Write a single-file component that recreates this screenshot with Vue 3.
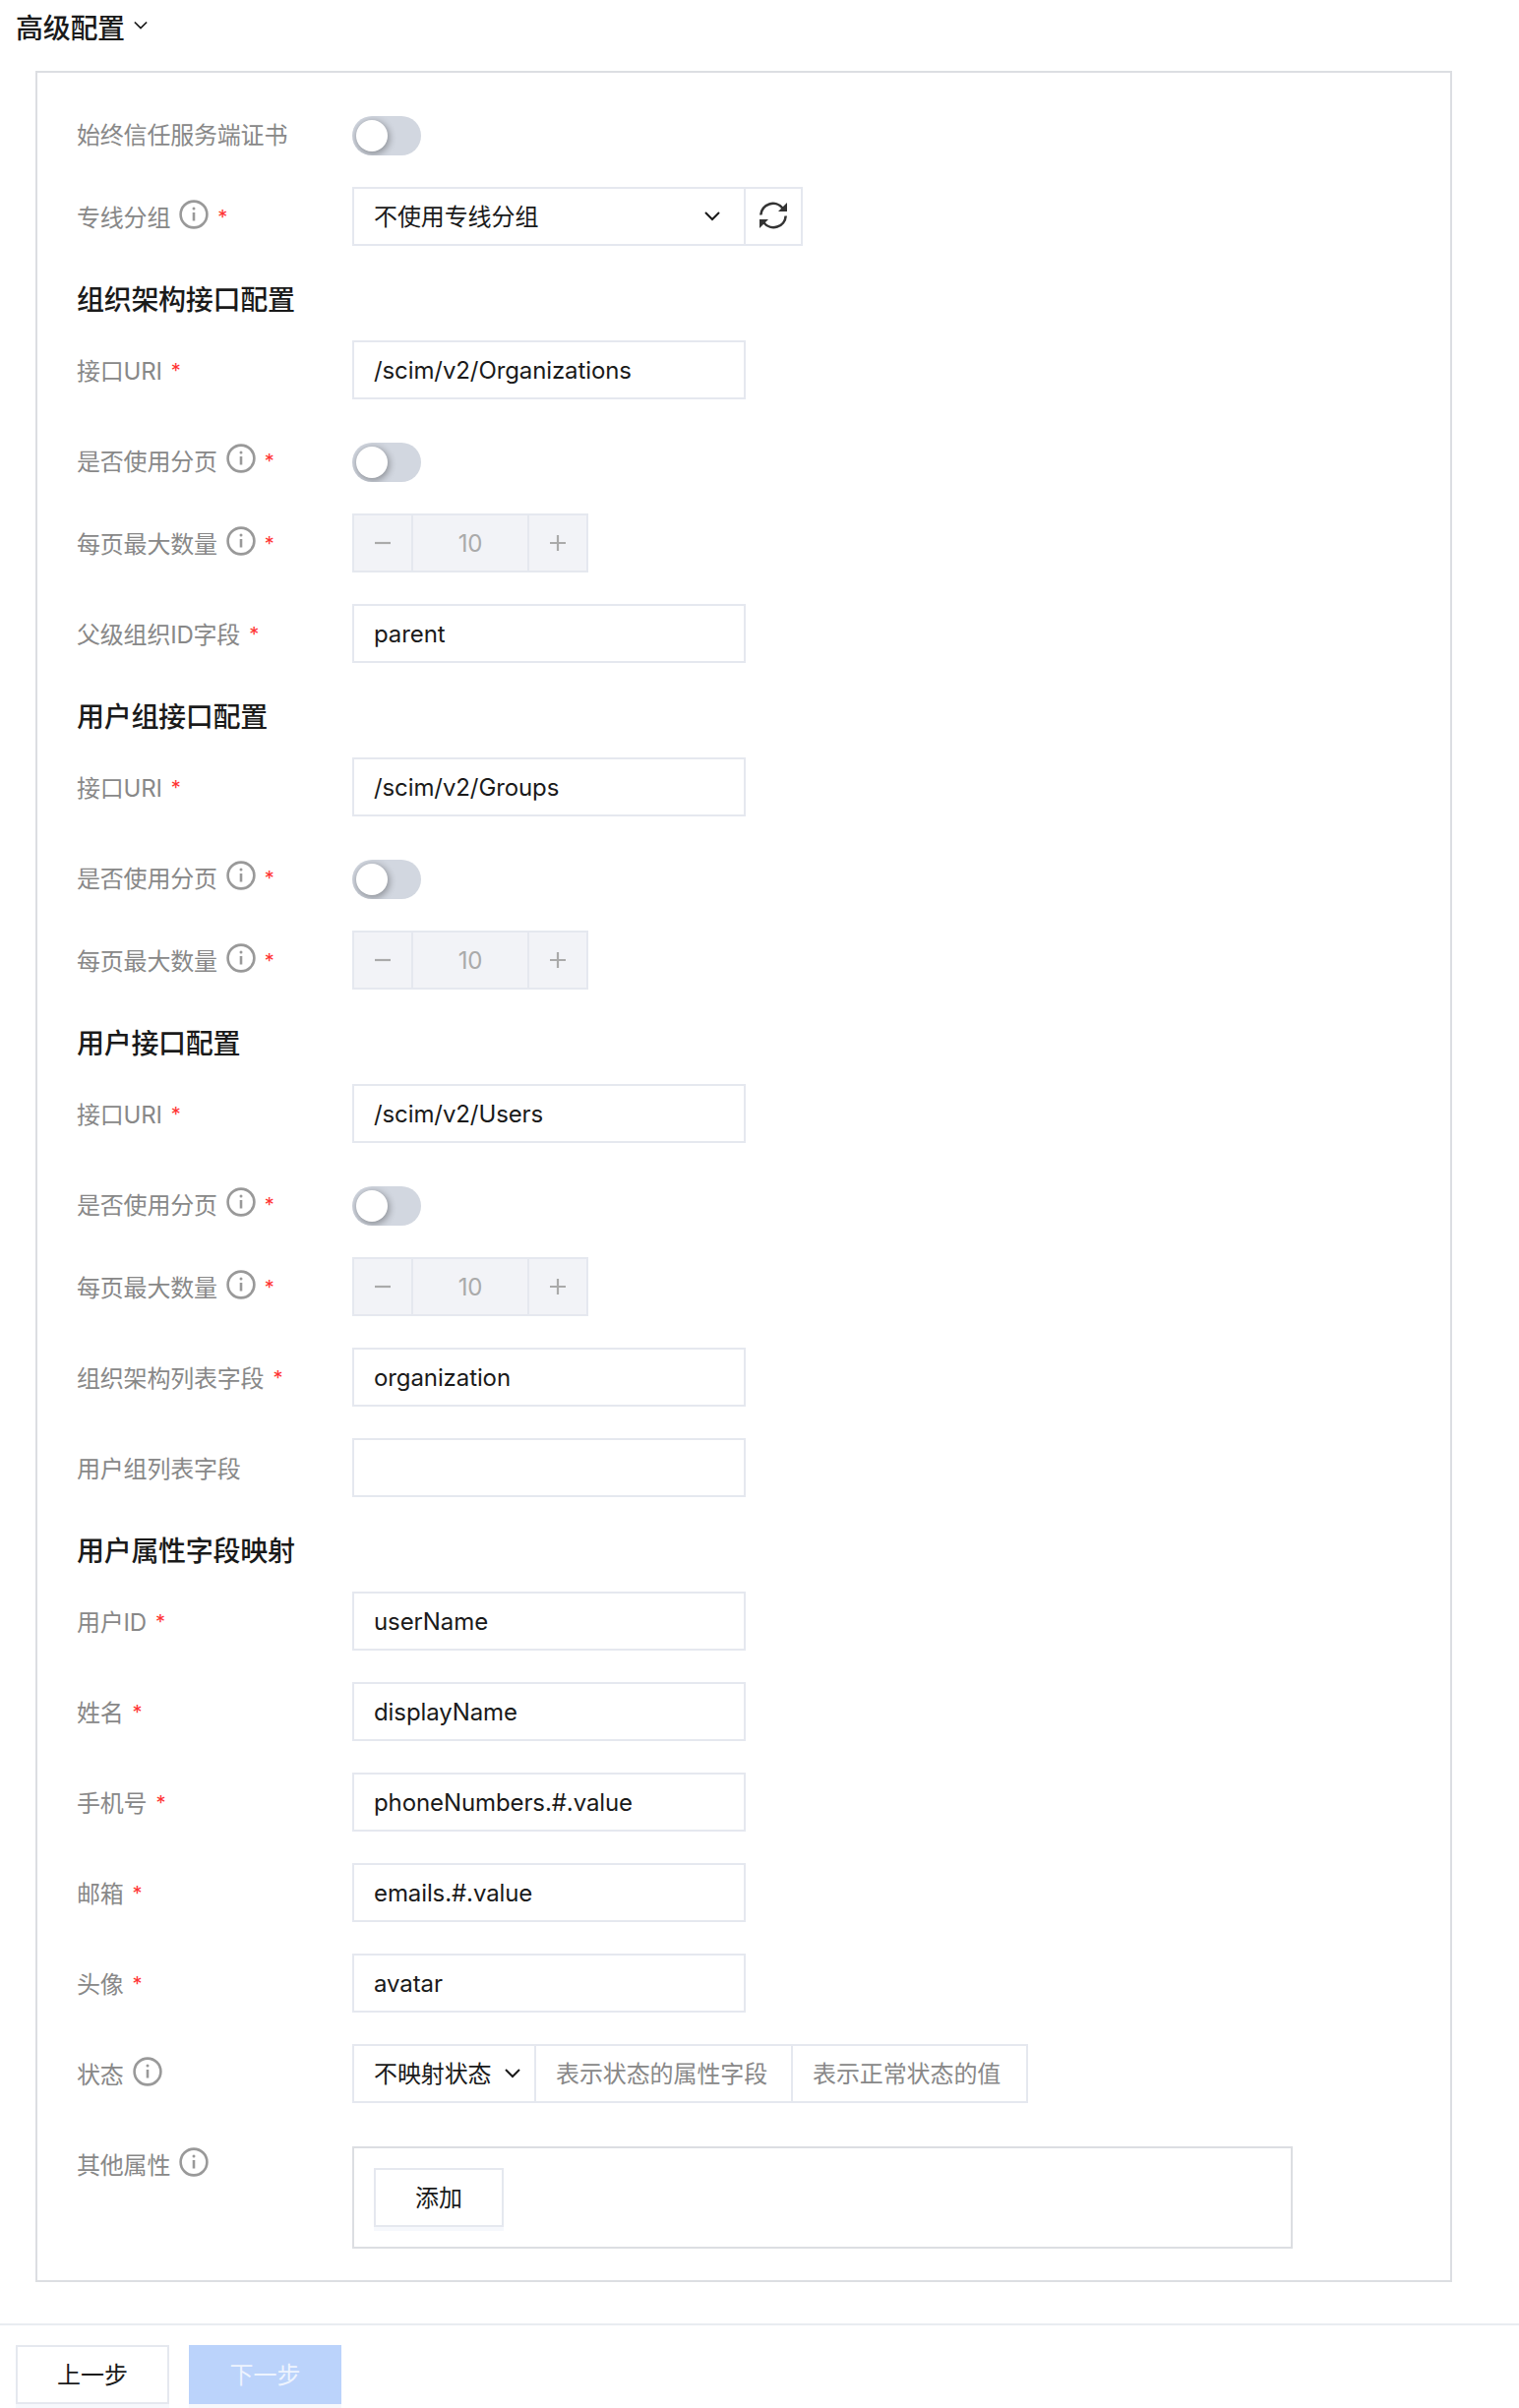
<script setup>
const blocks = [
  { kind: 'switch', label: '始终信任服务端证书' },
  { kind: 'select', label: '专线分组', info: true, req: true },
  { kind: 'heading', label: '组织架构接口配置' },
  { kind: 'input', label: '接口URI', req: true, value: '/scim/v2/Organizations' },
  { kind: 'switch', label: '是否使用分页', info: true, req: true },
  { kind: 'number', label: '每页最大数量', info: true, req: true },
  { kind: 'input', label: '父级组织ID字段', req: true, value: 'parent' },
  { kind: 'heading', label: '用户组接口配置' },
  { kind: 'input', label: '接口URI', req: true, value: '/scim/v2/Groups' },
  { kind: 'switch', label: '是否使用分页', info: true, req: true },
  { kind: 'number', label: '每页最大数量', info: true, req: true },
  { kind: 'heading', label: '用户接口配置' },
  { kind: 'input', label: '接口URI', req: true, value: '/scim/v2/Users' },
  { kind: 'switch', label: '是否使用分页', info: true, req: true },
  { kind: 'number', label: '每页最大数量', info: true, req: true },
  { kind: 'input', label: '组织架构列表字段', req: true, value: 'organization' },
  { kind: 'input', label: '用户组列表字段', value: '' },
  { kind: 'heading', label: '用户属性字段映射' },
  { kind: 'input', label: '用户ID', req: true, value: 'userName' },
  { kind: 'input', label: '姓名', req: true, value: 'displayName' },
  { kind: 'input', label: '手机号', req: true, value: 'phoneNumbers.#.value' },
  { kind: 'input', label: '邮箱', req: true, value: 'emails.#.value' },
  { kind: 'input', label: '头像', req: true, value: 'avatar' },
  { kind: 'status', label: '状态', info: true },
  { kind: 'other', label: '其他属性', info: true },
]
</script>

<template>
  <div class="page">
    <div class="adv-title">
      <span>高级配置</span>
      <svg class="chev chev-sm" viewBox="0 0 16 10"><path d="M1 1l7 7 7-7" /></svg>
    </div>
    <div class="panel">
      <template v-for="(b, i) in blocks" :key="i">
        <h3 v-if="b.kind === 'heading'" class="heading">{{ b.label }}</h3>
        <div v-else class="row" :class="`row-${b.kind}`">
          <label class="label">
            <span>{{ b.label }}</span>
            <svg v-if="b.info" class="info" viewBox="0 0 30 30">
              <circle cx="15" cy="15" r="13.4" />
              <path d="M15 13v8.5" />
              <circle class="dot" cx="15" cy="9" r="1.5" />
            </svg>
            <em v-if="b.req" class="req">*</em>
          </label>

          <div v-if="b.kind === 'switch'" class="switch"><i class="knob"></i></div>

          <div v-else-if="b.kind === 'select'" class="group">
            <div class="field select-field">
              <span class="cjk">不使用专线分组</span>
              <svg class="chev" viewBox="0 0 16 10"><path d="M1 1l7 7 7-7" /></svg>
            </div>
            <div class="refresh">
              <svg viewBox="0 0 28 28">
                <path class="arc" d="M1.3 13.5A12.5 12.5 0 0 1 23.5 6.5" />
                <path class="head" d="M28 1v9h-9z" />
                <path class="arc" d="M26.7 14.5A12.5 12.5 0 0 1 4.5 21.5" />
                <path class="head" d="M0 27v-9h9z" />
              </svg>
            </div>
          </div>

          <div v-else-if="b.kind === 'number'" class="number">
            <span class="step"><svg viewBox="0 0 16 16"><path d="M0 8h16" /></svg></span>
            <span class="num-val">10</span>
            <span class="step"><svg viewBox="0 0 16 16"><path d="M0 8h16M8 0v16" /></svg></span>
          </div>

          <div v-else-if="b.kind === 'input'" class="field">{{ b.value }}</div>

          <div v-else-if="b.kind === 'status'" class="group">
            <div class="field status-select">
              <span class="cjk">不映射状态</span>
              <svg class="chev" viewBox="0 0 16 10"><path d="M1 1l7 7 7-7" /></svg>
            </div>
            <div class="field ph ph-a"><span class="cjk">表示状态的属性字段</span></div>
            <div class="field ph ph-b"><span class="cjk">表示正常状态的值</span></div>
          </div>

          <div v-else-if="b.kind === 'other'" class="other-box">
            <button class="btn add">添加</button>
          </div>
        </div>
      </template>
    </div>
    <div class="footer">
      <button class="btn">上一步</button>
      <button class="btn primary">下一步</button>
    </div>
  </div>
</template>

<style scoped>
.page {
  width: 1544px;
  height: 2448px;
  overflow: hidden;
  background: #fff;
  font-family: Inter, "Noto Sans CJK SC", sans-serif;
  font-size: 24px;
  letter-spacing: -0.1px;
  color: #1a1a1a;
}
.adv-title {
  height: 56px;
  box-sizing: border-box;
  padding: 0 0 2px 16px;
  display: flex;
  align-items: center;
  gap: 9px;
  font-size: 28px;
  font-weight: 500;
  letter-spacing: -0.3px;
}
.chev {
  width: 16px;
  height: 10px;
  flex: none;
  margin-right: 4px;
  fill: none;
  stroke: #1a1a1a;
  stroke-width: 2;
}
.chev-sm { width: 14px; margin: -2px 0 0; }
.panel {
  display: flex;
  flex-direction: column;
  margin: 16px 0 0 36px;
  width: 1440px;
  box-sizing: border-box;
  border: 2px solid #dcdee2;
  padding: 32px 0 32px 40px;
}
.heading {
  margin: 9px 0 27px;
  font-size: 28px;
  font-weight: 500;
  line-height: 28px;
  letter-spacing: -0.3px;
  color: #1a1a1a;
}
.row {
  display: flex;
  margin-bottom: 32px;
}
.row:last-child { margin-bottom: 0; }
.label {
  width: 280px;
  flex: none;
  height: 60px;
  box-sizing: border-box;
  padding-bottom: 2px;
  display: flex;
  align-items: center;
  color: #888;
  letter-spacing: -0.2px;
}
.info {
  width: 30px;
  height: 30px;
  margin: 0 0 2px 9px;
  fill: none;
  stroke: #999;
  stroke-width: 2.6;
}
.info .dot { fill: #999; stroke: none; }
.req {
  margin: 4px 0 0 9px;
  color: #f33;
  font-style: normal;
  font-size: 20px;
}
.cjk { margin-top: -3px; }
.row-switch { margin-top: 12px; }
.row-switch .label { height: 36px; }
.switch {
  width: 70px;
  height: 40px;
  border-radius: 20px;
  background: #d2d7e0;
  position: relative;
  overflow: hidden;
}
.knob {
  position: absolute;
  left: 4px;
  top: 4px;
  width: 32px;
  height: 32px;
  border-radius: 50%;
  background: #fff;
  box-shadow: 1px 2px 7px 1px rgba(0, 0, 0, 0.32);
}
.group { display: flex; }
.field {
  width: 400px;
  height: 60px;
  box-sizing: border-box;
  border: 2px solid #e5e8ef;
  padding: 0 20px;
  display: flex;
  align-items: center;
  justify-content: space-between;
  white-space: nowrap;
  background: #fff;
}
.refresh {
  width: 58px;
  height: 60px;
  box-sizing: border-box;
  border: 2px solid #e5e8ef;
  border-left: 0;
  display: flex;
  align-items: center;
  justify-content: center;
}
.refresh svg {
  width: 28px;
  height: 28px;
  margin-top: -2px;
}
.arc { fill: none; stroke: #333; stroke-width: 2.6; }
.head { fill: #333; }
.number {
  width: 240px;
  height: 60px;
  box-sizing: border-box;
  display: flex;
  border: 2px solid #e5e8ef;
  background: #f2f3f7;
  color: #aaa;
}
.step {
  width: 58px;
  display: flex;
  align-items: center;
  justify-content: center;
}
.step svg {
  width: 16px;
  height: 16px;
  stroke: #aaa;
  stroke-width: 2.2;
}
.num-val {
  flex: 1;
  border: solid #e5e8ef;
  border-width: 0 2px;
  display: flex;
  align-items: center;
  justify-content: center;
}
.status-select { width: 187px; padding-right: 14px; }
.status-select .chev { margin: 0; }
.ph {
  border-left: 0;
  color: #888;
}
.ph-a { width: 261px; }
.ph-b { width: 239px; }
.row-other { margin-top: 12px; }
.row-other .label { height: 36px; }
.other-box {
  width: 956px;
  height: 104px;
  box-sizing: border-box;
  border: 2px solid #dcdee2;
  padding: 20px;
}
.btn {
  height: 60px;
  box-sizing: border-box;
  border: 2px solid #e5e8ef;
  background: #fff;
  font: inherit;
  color: #1a1a1a;
  padding: 0 0 3px;
  box-shadow: 0 4px 0 #f6f8fc;
}
.add { width: 132px; display: block; }
.footer {
  margin-top: 42px;
  border-top: 2px solid #e9ecf1;
  padding: 20px 0 0 16px;
  display: flex;
  gap: 20px;
}
.footer .btn { width: 156px; }
.footer .primary {
  width: 155px;
  background: #bbd3fb;
  border-color: #bbd3fb;
  color: rgba(255, 255, 255, 0.75);
}
</style>
